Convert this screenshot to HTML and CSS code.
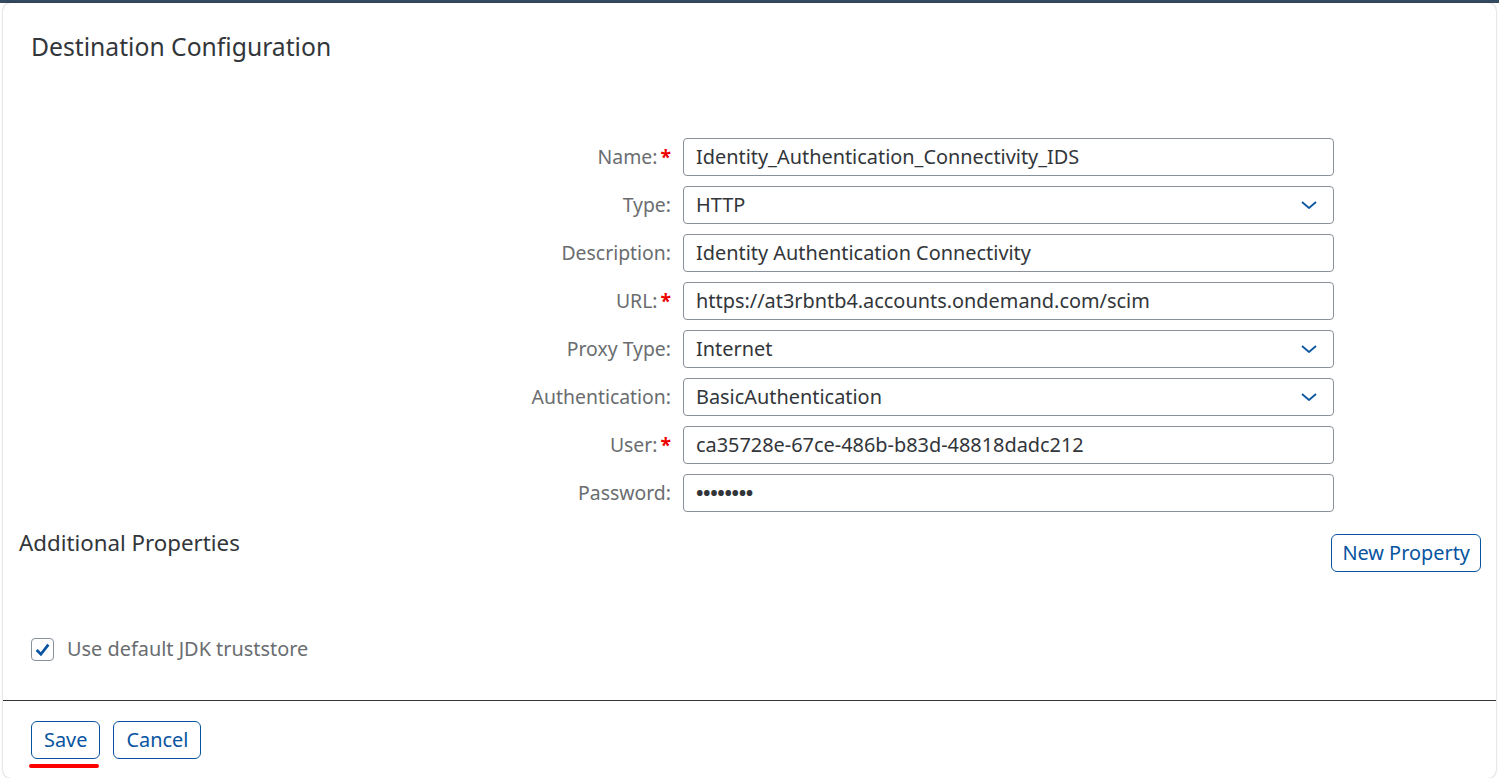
FILE: index.html
```html
<!DOCTYPE html>
<html>
<head>
<meta charset="utf-8">
<title>Destination Configuration</title>
<link rel="stylesheet" href="styles.css">
</head>
<body>
<div class="topbar"></div>
<div class="card">
  <h1 class="title">Destination Configuration</h1>
  <div class="form">
    <label class="lbl">Name:<span class="req">*</span></label>
    <div class="input">Identity_Authentication_Connectivity_IDS</div>

    <label class="lbl">Type:</label>
    <div class="input select">HTTP<svg class="chev" viewBox="0 0 16 8"><path d="M1 1 L8 7 L15 1"/></svg></div>

    <label class="lbl">Description:</label>
    <div class="input">Identity Authentication Connectivity</div>

    <label class="lbl">URL:<span class="req">*</span></label>
    <div class="input">https://at3rbntb4.accounts.ondemand.com/scim</div>

    <label class="lbl">Proxy Type:</label>
    <div class="input select">Internet<svg class="chev" viewBox="0 0 16 8"><path d="M1 1 L8 7 L15 1"/></svg></div>

    <label class="lbl">Authentication:</label>
    <div class="input select">BasicAuthentication<svg class="chev" viewBox="0 0 16 8"><path d="M1 1 L8 7 L15 1"/></svg></div>

    <label class="lbl">User:<span class="req">*</span></label>
    <div class="input">ca35728e-67ce-486b-b83d-48818dadc212</div>

    <label class="lbl">Password:</label>
    <div class="input pw">&bull;&bull;&bull;&bull;&bull;&bull;&bull;&bull;</div>
  </div>

  <div class="props">
    <h2 class="subtitle">Additional Properties</h2>
    <button class="btn">New Property</button>
  </div>

  <div class="checkrow">
    <span class="checkbox"><svg viewBox="0 0 16 16"><path d="M2.5 8.5 L6.5 12.5 L13.5 3.5"/></svg></span>
    <span class="checklbl">Use default JDK truststore</span>
  </div>

  <div class="footer">
    <div class="savewrap">
      <button class="btn wide">Save</button>
      <span class="mark"></span>
    </div>
    <button class="btn wide">Cancel</button>
  </div>
</div>
</body>
</html>
```

FILE: styles.css
```css
html, body {
  margin: 0;
  padding: 0;
  background: #ffffff;
  font-family: "Noto Sans", "Open Sans", Arial, sans-serif;
  color: #32363a;
}

.topbar {
  height: 3px;
  background: #354a5f;
}

.card {
  margin: 0 3px;
  height: 775px;
  box-sizing: border-box;
  border-radius: 8px;
  box-shadow: 0 0 2px rgba(0, 0, 0, 0.35);
  background: #fff;
  display: flex;
  flex-direction: column;
}

.title {
  margin: 0;
  padding: 30px 0 0 28px;
  font-size: 24.7px;
  font-weight: normal;
  line-height: 28px;
  color: #32363a;
}

.form {
  margin-top: 77px;
  display: grid;
  grid-template-columns: 668px 651px;
  column-gap: 12px;
  row-gap: 10px;
}

.lbl {
  justify-self: end;
  align-self: center;
  font-size: 19.4px;
  line-height: 24px;
  color: #6a6d70;
  white-space: nowrap;
}

.req {
  color: #e00;
  font-weight: bold;
  margin-left: 3px;
}

.input {
  height: 38px;
  box-sizing: border-box;
  border: 1px solid #89919a;
  border-radius: 4px;
  padding: 0 12px;
  display: flex;
  align-items: center;
  font-size: 19.9px;
  line-height: 24px;
  color: #32363a;
  white-space: nowrap;
}

.select {
  justify-content: space-between;
}

.chev {
  width: 16px;
  height: 8px;
  margin-right: 4px;
  fill: none;
  stroke: #0854a0;
  stroke-width: 1.8;
}

.pw {
  font-size: 20px;
  letter-spacing: -0.4px;
  font-weight: bold;
}

.props {
  display: flex;
  justify-content: space-between;
  align-items: flex-start;
  padding: 22px 15px 0 16px;
}

.subtitle {
  margin: 0;
  font-size: 22.3px;
  font-weight: normal;
  line-height: 18px;
  color: #32363a;
}

.btn {
  height: 38px;
  box-sizing: border-box;
  border: 1px solid #0854a0;
  border-radius: 6px;
  background: #fff;
  color: #0854a0;
  font-family: "Noto Sans", "Open Sans", Arial, sans-serif;
  font-size: 19.9px;
  line-height: 24px;
  padding: 0 10px;
  cursor: pointer;
}

.btn.wide {
  padding: 0 12px;
}

.checkrow {
  display: flex;
  align-items: center;
  gap: 13px;
  padding: 65px 0 0 28px;
}

.checkbox {
  width: 23px;
  height: 23px;
  box-sizing: border-box;
  border: 1px solid #89919a;
  border-radius: 4px;
  display: flex;
  align-items: center;
  justify-content: center;
}

.checkbox svg {
  width: 17px;
  height: 17px;
  fill: none;
  stroke: #0854a0;
  stroke-width: 2.6;
}

.checklbl {
  font-size: 19.9px;
  line-height: 24px;
  color: #6a6d70;
}

.footer {
  margin-top: 39px;
  border-top: 1px solid #32363a;
  display: flex;
  gap: 13px;
  padding: 20px 0 0 28px;
}

.savewrap {
  display: flex;
  flex-direction: column;
  align-items: flex-start;
}

.mark {
  width: 70px;
  height: 4px;
  margin: 5px 0 0 -2px;
  border-radius: 2px;
  background: #f00;
}
```
